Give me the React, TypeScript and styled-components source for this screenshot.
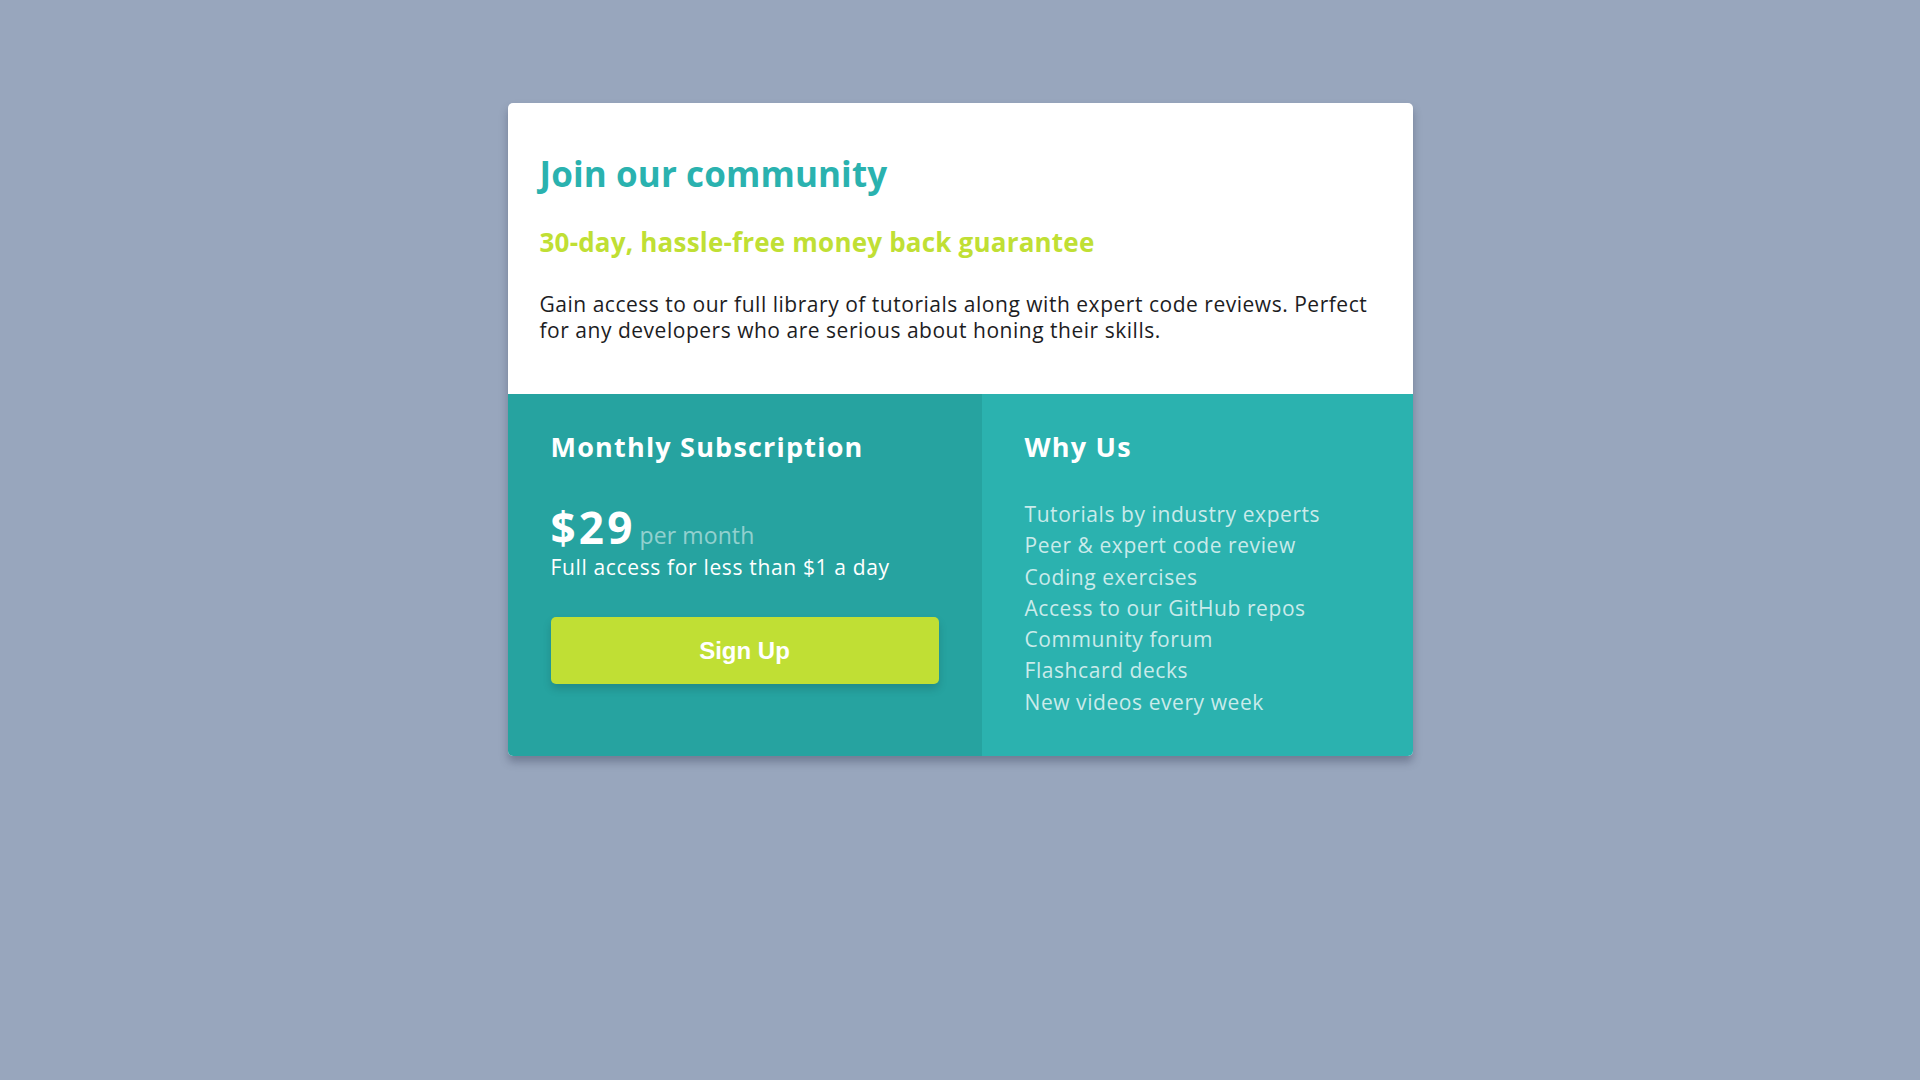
import React from "react";
import styled, { createGlobalStyle } from "styled-components";

const GlobalStyle = createGlobalStyle`
  html, body {
    margin: 0;
    padding: 0;
    background: #98a6bd;
  }
  body {
    font-family: "Open Sans", "Noto Sans", sans-serif;
  }
`;

const Page = styled.main`
  min-height: 1080px;
  display: flex;
  justify-content: center;
  align-items: flex-start;
  padding-top: 103px;
  box-sizing: border-box;
`;

const Card = styled.section`
  width: 905px;
  border-radius: 5px;
  overflow: hidden;
  background: #ffffff;
  box-shadow: 0 6px 8px rgba(40, 50, 75, 0.35);
`;

const Intro = styled.div`
  padding: 50px 32px 51px;
`;

const Title = styled.h1`
  margin: 0;
  font-size: 35px;
  line-height: 42px;
  font-weight: 700;
  letter-spacing: 0.1px;
  color: #2ab2af;
`;

const Guarantee = styled.h2`
  margin: 32px 0 0;
  font-size: 26px;
  line-height: 31px;
  font-weight: 700;
  letter-spacing: 0.2px;
  color: #c0df34;
`;

const Lead = styled.p`
  margin: 33px 0 0;
  font-size: 21px;
  line-height: 26px;
  letter-spacing: 0.52px;
  color: #1d1d1f;
`;

const Bottom = styled.div`
  display: grid;
  grid-template-columns: 474px 1fr;
`;

const Column = styled.div<{ $tone: "dark" | "light" }>`
  background: ${(p) => (p.$tone === "dark" ? "#26a3a0" : "#2bb2af")};
  padding: 37px 43px 38px;
  color: #ffffff;
`;

const ColumnTitle = styled.h3`
  margin: 0;
  font-size: 27px;
  line-height: 32px;
  font-weight: 700;
  letter-spacing: 1.2px;
  color: #ffffff;
`;

const PriceRow = styled.div`
  margin-top: 39px;
  display: flex;
  align-items: baseline;
`;

const Price = styled.span`
  font-size: 44px;
  line-height: 50px;
  font-weight: 700;
  letter-spacing: 3.2px;
`;

const Period = styled.span`
  margin-left: 4px;
  font-size: 23px;
  letter-spacing: 0.1px;
  color: rgba(255, 255, 255, 0.5);
`;

const PriceNote = styled.p`
  margin: 3px 0 0;
  font-size: 21px;
  line-height: 24px;
  letter-spacing: 0.65px;
`;

const SignUp = styled.button`
  display: block;
  margin-top: 38px;
  width: 100%;
  height: 67px;
  border: none;
  border-radius: 5px;
  background: #c0df34;
  color: #ffffff;
  font-family: "Liberation Sans", Arial, sans-serif;
  font-weight: 700;
  font-size: 24px;
  box-shadow: 0 5px 8px rgba(0, 0, 0, 0.15);
  cursor: pointer;
`;

const Features = styled.ul`
  margin: 36px 0 0;
  padding: 0;
  list-style: none;
`;

const Feature = styled.li`
  font-size: 21px;
  line-height: 31.3px;
  letter-spacing: 0.57px;
  color: rgba(255, 255, 255, 0.75);
`;

const features = [
  "Tutorials by industry experts",
  "Peer & expert code review",
  "Coding exercises",
  "Access to our GitHub repos",
  "Community forum",
  "Flashcard decks",
  "New videos every week",
];

export default function App() {
  return (
    <>
      <GlobalStyle />
      <Page>
        <Card>
          <Intro>
            <Title>Join our community</Title>
            <Guarantee>30-day, hassle-free money back guarantee</Guarantee>
            <Lead>
              Gain access to our full library of tutorials along with expert code reviews. Perfect
              for any developers who are serious about honing their skills.
            </Lead>
          </Intro>
          <Bottom>
            <Column $tone="dark">
              <ColumnTitle>Monthly Subscription</ColumnTitle>
              <PriceRow>
                <Price>$29</Price>
                <Period>per month</Period>
              </PriceRow>
              <PriceNote>Full access for less than $1 a day</PriceNote>
              <SignUp>Sign Up</SignUp>
            </Column>
            <Column $tone="light">
              <ColumnTitle>Why Us</ColumnTitle>
              <Features>
                {features.map((f) => (
                  <Feature key={f}>{f}</Feature>
                ))}
              </Features>
            </Column>
          </Bottom>
        </Card>
      </Page>
    </>
  );
}
